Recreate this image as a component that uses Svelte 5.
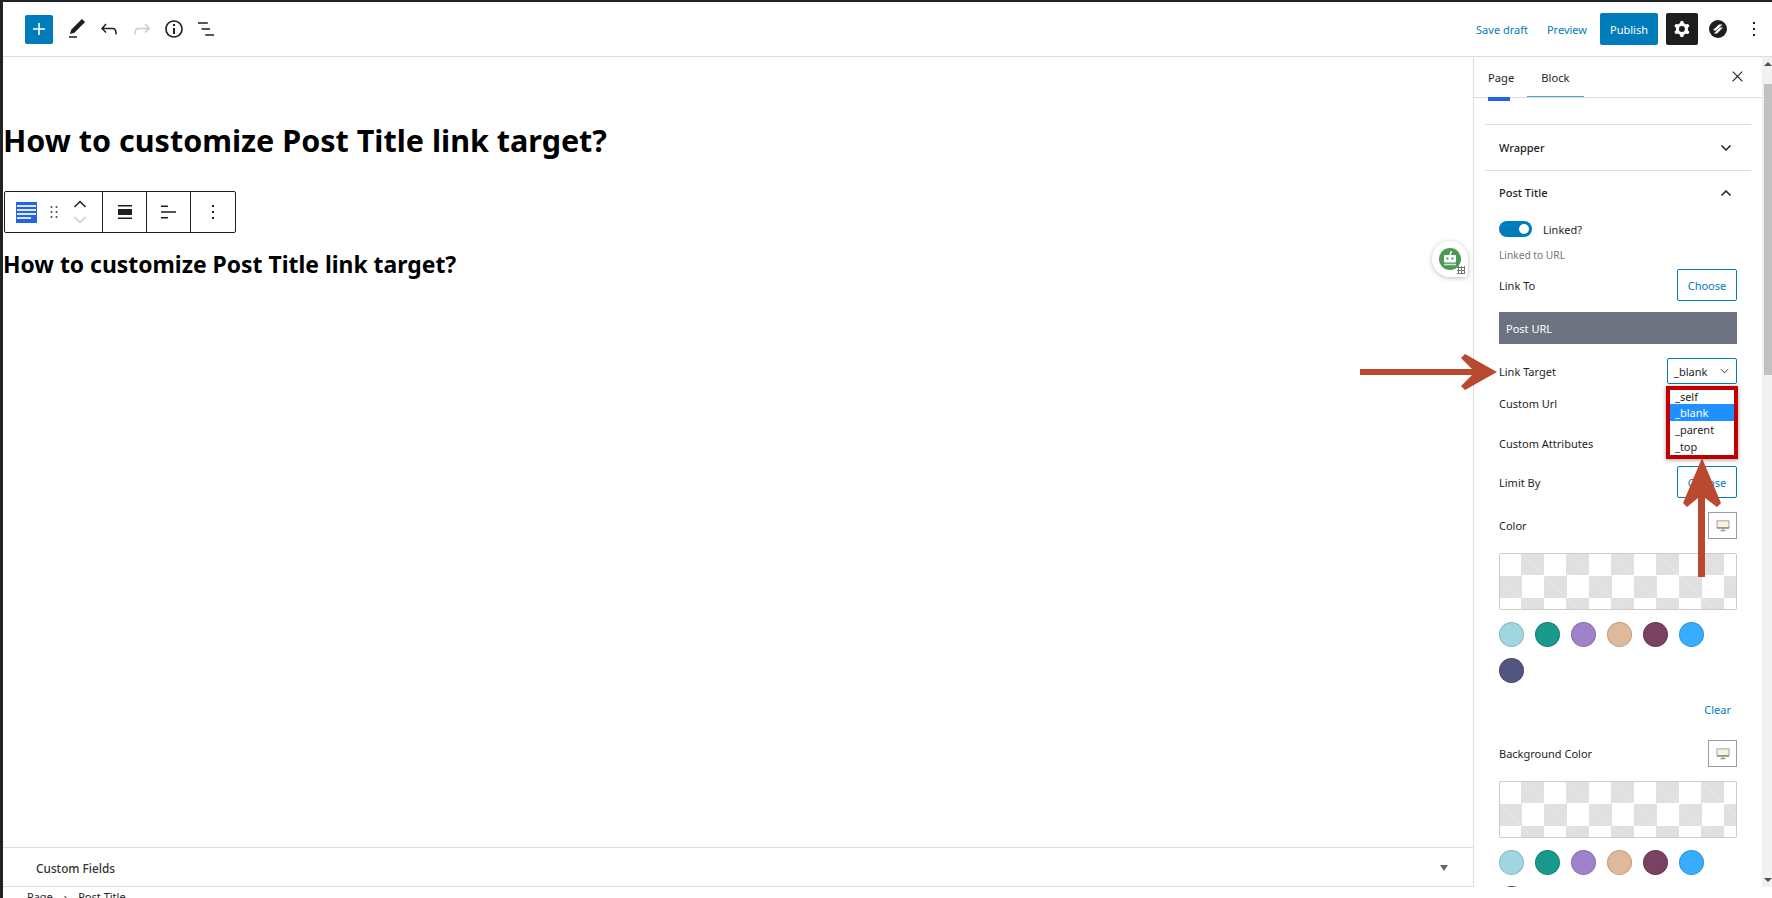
<script>
  const swatches = ['#9fd6df', '#17998c', '#a082cb', '#deb99b', '#7a4162', '#38acff', '#515580'];
</script>

{#snippet device()}
  <button class="device" aria-label="Device">
    <svg viewBox="0 0 16 14" width="14" height="12"><rect x="1" y="1" width="14" height="8" fill="#fdf3d6" stroke="#8a97a5"/><path d="M1 9.500h14M8 10v2M5 12.500h6" stroke="#666" fill="none"/></svg>
  </button>
{/snippet}

{#snippet colorControl(label)}
  <div class="row color-head"><span>{label}</span>{@render device()}</div>
  <div class="checker"></div>
  <div class="swatches">
    {#each swatches as c}
      <span class="swatch" style={`background:${c}`}></span>
    {/each}
  </div>
{/snippet}

<div class="app">
  <header class="top">
    <div class="top-left">
      <button class="add" aria-label="Add">
        <svg viewBox="0 0 24 24" width="24" height="24"><path fill="#fff" d="M18 11.200h-5.200V6h-1.600v5.200H6v1.600h5.200V18h1.600v-5.200H18z"/></svg>
      </button>
      <svg class="ic" viewBox="0 0 24 24"><path d="M20.100 5.100L16.900 2 6.200 12.700l-1.300 4.400 4.500-1.300L20.100 5.100zM4 20.800h8v-1.500H4v1.500z"/></svg>
      <svg class="ic" viewBox="0 0 24 24"><path d="M18.300 11.700c-.6-.6-1.400-.9-2.300-.9H6.700l2.900-3.300-1.100-1-4.500 5L8.500 16l1-1-2.700-2.700H16c.5 0 .9.2 1.300.5 1 1 1 3.400 1 4.500v.3h1.500v-.2c0-1.500 0-4.300-1.500-5.700z"/></svg>
      <svg class="ic off" viewBox="0 0 24 24"><path d="M15.600 6.500l-1.100 1 2.900 3.300H8c-.9 0-1.700.3-2.300.9-1.400 1.500-1.400 4.200-1.400 5.600v.2h1.500v-.3c0-1.100 0-3.500 1-4.500.3-.3.7-.5 1.300-.5h9.200L14.500 15l1.100 1.100 4.600-4.600-4.600-5z"/></svg>
      <svg class="ic" viewBox="0 0 24 24"><path d="M12 3.200c-4.800 0-8.800 3.900-8.800 8.800 0 4.800 3.900 8.800 8.800 8.800 4.800 0 8.800-3.900 8.800-8.800 0-4.800-4-8.800-8.800-8.800zm0 16c-4 0-7.200-3.300-7.200-7.200C4.800 8 8 4.800 12 4.800s7.200 3.300 7.200 7.200c0 4-3.200 7.200-7.200 7.200zM11 17h2v-6h-2v6zm0-8h2V7h-2v2z"/></svg>
      <svg class="ic" viewBox="0 0 24 24"><path d="M4 5.200h9.800v1.500H4zM7.500 11.200H16v1.500H7.500zM11.200 17.200H20v1.500h-8.800z"/></svg>
    </div>
    <div class="top-right">
      <a class="link save">Save draft</a>
      <a class="link preview">Preview</a>
      <button class="publish">Publish</button>
      <button class="settings" aria-label="Settings">
        <svg viewBox="0 0 24 24" width="24" height="24"><path fill="#fff" fill-rule="evenodd" d="M10.289 4.836A1 1 0 0111.275 4h1.306a1 1 0 01.987.836l.244 1.466c.787.26 1.503.679 2.108 1.218l1.393-.522a1 1 0 011.216.437l.653 1.130a1 1 0 01-.23 1.273l-1.148.944a6.025 6.025 0 010 2.435l1.149.946a1 1 0 01.23 1.272l-.653 1.130a1 1 0 01-1.216.437l-1.394-.522c-.605.54-1.320.958-2.108 1.218l-.244 1.466a1 1 0 01-.987.836h-1.306a1 1 0 01-.986-.836l-.244-1.466a5.995 5.995 0 01-2.108-1.218l-1.394.522a1 1 0 01-1.217-.437l-.653-1.130a1 1 0 01.23-1.272l1.149-.946a6.026 6.026 0 010-2.435l-1.148-.944a1 1 0 01-.23-1.272l.653-1.131a1 1 0 011.217-.437l1.393.522a5.994 5.994 0 012.108-1.218l.244-1.466zM14.929 12a3 3 0 11-6 0 3 3 0 016 0z"/></svg>
      </button>
      <svg class="zlogo" viewBox="0 0 18 18" width="18" height="18"><circle cx="9" cy="9" r="9" fill="#1e1e1e"/><path d="M4.500 9.500L10 4.500h3.500L7 10.500H4.500zM14 7.500L8 13.500H4.800L11 7.500z" fill="#fff"/></svg>
      <svg class="ic more" viewBox="0 0 24 24"><path d="M13 19h-2v-2h2v2zm0-6h-2v-2h2v2zm0-6h-2V5h2v2z"/></svg>
    </div>
  </header>

  <div class="main">
    <section class="canvas">
      <div class="editor">
        <h1>How to customize Post Title link target?</h1>
        <div class="toolbar">
          <div class="tb-group first">
            <span class="blockicon"><i></i><i></i><i></i><i class="short"></i></span>
            <svg viewBox="0 0 24 24" width="20" height="20" class="drag"><path d="M8 7h2V5H8v2zm0 6h2v-2H8v2zm0 6h2v-2H8v2zm6-14v2h2V5h-2zm0 8h2v-2h-2v2zm0 6h2v-2h-2v2z"/></svg>
            <span class="updown">
              <svg viewBox="0 0 14 8" width="14" height="8"><path d="M1.500 7L7 1.500 12.500 7" fill="none" stroke="#1e1e1e" stroke-width="1.500"/></svg>
              <svg viewBox="0 0 14 8" width="14" height="8"><path d="M1.500 1L7 6.500 12.500 1" fill="none" stroke="#ccc" stroke-width="1.500"/></svg>
            </span>
          </div>
          <div class="tb-group w44">
            <svg viewBox="0 0 24 24" width="24" height="24"><path d="M5 5h14v1.500H5zM5 17.500h14V19H5zM5 9h14v6H5z" fill="#1e1e1e"/></svg>
          </div>
          <div class="tb-group w44">
            <svg viewBox="0 0 24 24" width="24" height="24"><path d="M4 5.500h7V7H4zM4 11.200h15v1.500H4zM4 17h7v1.500H4z" fill="#1e1e1e"/></svg>
          </div>
          <div class="tb-group last">
            <svg viewBox="0 0 24 24" width="24" height="24"><path d="M13 19h-2v-2h2v2zm0-6h-2v-2h2v2zm0-6h-2V5h2v2z" fill="#1e1e1e"/></svg>
          </div>
        </div>
        <h2>How to customize Post Title link target?</h2>
      </div>
      <div class="custom-fields">
        <span>Custom Fields</span>
        <span class="tri"></span>
      </div>
    </section>

    <aside class="sidebar">
      <div class="side-inner">
        <div class="tabs">
          <span class="tab page">Page</span>
          <span class="tab block">Block</span>
          <svg class="close" viewBox="0 0 24 24" width="17" height="17"><path d="M13 11.800l6.100-6.300-1-1-6.100 6.200-6.100-6.200-1 1 6.100 6.300-6.500 6.700 1 1 6.500-6.600 6.500 6.600 1-1z"/></svg>
        </div>
        <div class="panels">
          <div class="panel-title wrapper-t">
            <span>Wrapper</span>
            <svg viewBox="0 0 12 8" width="12" height="8"><path d="M1.500 1.500L6 6l4.500-4.500" fill="none" stroke="#1e1e1e" stroke-width="1.500"/></svg>
          </div>
          <div class="panel-title post-t">
            <span>Post Title</span>
            <svg viewBox="0 0 12 8" width="12" height="8"><path d="M1.500 6.500L6 2l4.500 4.500" fill="none" stroke="#1e1e1e" stroke-width="1.500"/></svg>
          </div>
          <div class="body">
            <div class="toggle-row"><span class="toggle"><b></b></span><span>Linked?</span></div>
            <p class="help">Linked to URL</p>
            <div class="row linkto"><span>Link To</span><button class="choose">Choose</button></div>
            <div class="posturl">Post URL</div>
            <div class="row target">
              <span>Link Target</span>
              <span class="select">_blank
                <svg viewBox="0 0 10 6" width="9" height="6"><path d="M1 1l4 4 4-4" fill="none" stroke="#1e1e1e" stroke-width="1"/></svg>
              </span>
            </div>
            <div class="row custom-url"><span>Custom Url</span></div>
            <div class="row custom-attr"><span>Custom Attributes</span></div>
            <div class="row limit"><span>Limit By</span><button class="choose">Choose</button></div>
            {@render colorControl('Color')}
            <div class="clear-row"><a class="link">Clear</a></div>
            {@render colorControl('Background Color')}
          </div>
        </div>
      </div>
      <div class="scrollbar">
        <span class="up"></span>
        <span class="thumb"></span>
        <span class="down"></span>
      </div>
    </aside>
  </div>

  <div class="crumbs"><span>Page</span><span class="sep">›</span><span>Post Title</span></div>

  <div class="dropdown">
    <div class="first-opt">_self</div>
    <div class="sel">_blank</div>
    <div>_parent</div>
    <div>_top</div>
  </div>

  <svg class="arrows" viewBox="0 0 1772 898" width="1772" height="898">
    <g fill="#b94a30">
      <path d="M1360 369h112l-11-11 4-4 32 18-32 18-4-4 11-11h-112z"/>
      <path d="M1698 577V498l-11 9-4-4 19-45 19 45-4 4-12-9v79z"/>
    </g>
  </svg>

  <div class="bot" aria-hidden="true">
    <svg viewBox="0 0 24 24" width="24" height="24">
      <circle cx="12" cy="12" r="11" fill="#4b9a53"/>
      <rect x="6" y="8" width="12" height="7.500" rx="1" fill="#fff"/>
      <rect x="8.500" y="10.500" width="2" height="2" fill="#4b9a53"/>
      <rect x="13.500" y="10.500" width="2" height="2" fill="#4b9a53"/>
      <path d="M12 8l1.500-4" stroke="#fff" stroke-width="1.500"/>
      <path d="M6 17.500h12" stroke="#cfe6d1" stroke-width="1.500"/>
    </svg>
    <span class="grip"></span>
  </div>
  <span class="edge"></span>
</div>

<style>
  :global(body) { margin: 0; background: #fff; overflow: hidden; }
  .app {
    position: relative;
    width: 1772px; height: 898px; overflow: hidden;
    box-sizing: border-box;
    border-top: 2px solid #1d2327;
    border-left: 3px solid #1d2327;
    display: flex; flex-direction: column;
    font-family: "Noto Sans", "Open Sans", sans-serif;
    font-size: 11px; color: #1e1e1e;
  }
  button { font: inherit; border: 0; padding: 0; background: none; display: inline-flex; align-items: center; justify-content: center; }
  p { margin: 0; }
  .top {
    height: 55px; flex: none; box-sizing: border-box;
    border-bottom: 1px solid #ddd;
    display: flex; justify-content: space-between; align-items: center;
  }
  .top-left { display: flex; align-items: center; padding-left: 22px; }
  .add { width: 28px; height: 29px; background: #007cba; border-radius: 2px; margin-right: 12px; }
  .ic { width: 24px; height: 24px; fill: #1e1e1e; margin-right: 8.300px; }
  .ic.off { fill: #ccc; }
  .top-right { display: flex; align-items: center; padding-right: 6px; }
  .link { color: #007cba; }
  .save { margin-right: 19px; }
  .preview { margin-right: 13px; }
  .publish { width: 58px; height: 32px; background: #007cba; color: #fff; border-radius: 2px; margin-right: 8px; }
  .settings { width: 32px; height: 32px; background: #1e1e1e; border-radius: 2px; margin-right: 11px; }
  .zlogo { margin-right: 15px; }
  .ic.more { margin: 0; }
  .main { height: 830px; flex: none; display: flex; }
  .canvas { flex: 1; min-width: 0; display: flex; flex-direction: column; }
  .editor { flex: 1; min-height: 0; }
  h1 { margin: 0; padding-top: 63px; font-size: 30.500px; line-height: 40px; font-weight: 700; color: #000; }
  h2 { margin: 0; padding-top: 16px; font-size: 22.900px; line-height: 32px; font-weight: 700; color: #000; }
  .toolbar {
    display: flex; width: 232px; height: 42px; box-sizing: border-box; margin: 31px 0 0 1px;
    border: 1px solid #1e1e1e; border-radius: 2px;
  }
  .tb-group { display: flex; align-items: center; justify-content: center; box-sizing: border-box; border-right: 1px solid #1e1e1e; height: 100%; }
  .tb-group.first { width: 98px; justify-content: flex-start; padding-left: 11px; }
  .tb-group.w44 { width: 44px; }
  .tb-group.last { flex: 1; border-right: 0; }
  .blockicon { width: 21px; height: 21px; background: #2563eb; display: flex; flex-direction: column; justify-content: center; gap: 2px; padding: 0 1px; box-sizing: border-box; }
  .blockicon i { display: block; height: 2px; background: #dfe8fc; }
  .blockicon i.short { width: 75%; }
  .drag { margin-left: 7px; fill: #1e1e1e; }
  .updown { display: flex; flex-direction: column; gap: 8px; margin-left: 9px; }
  .custom-fields {
    height: 40px; flex: none; box-sizing: border-box;
    border-top: 1px solid #ddd; border-bottom: 1px solid #ddd;
    display: flex; align-items: center; justify-content: space-between;
    padding: 2px 25px 0 33px; font-size: 11.800px; font-weight: 500; color: #333;
  }
  .tri { border-left: 4px solid transparent; border-right: 4px solid transparent; border-top: 6px solid #666; }
  .sidebar { width: 299px; flex: none; display: flex; border-left: 1px solid #ddd; box-sizing: border-box; height: 830px; }
  .side-inner { flex: 1; min-width: 0; overflow: hidden; }
  .tabs { height: 41px; position: relative; box-sizing: border-box; border-bottom: 1px solid #ddd; display: flex; align-items: center; padding-left: 14px; }
  .tab { font-size: 11.200px; }
  .tab.page { position: relative; color: #1e1e1e; }
  .tab.page::after { content: ""; position: absolute; left: 0; width: 22px; height: 4px; background: #2563eb; top: 27px; }
  .tab.block { margin-left: 27px; position: relative; }
  .tab.block::after { content: ""; position: absolute; left: -14px; right: -14px; height: 1px; background: #4ca6d4; top: 26px; }
  .close { position: absolute; right: 16px; top: 11px; fill: #1e1e1e; }
  .panels { padding: 26px 12px 0 11px; width: 266px; box-sizing: content-box; }
  .panel-title { display: flex; justify-content: space-between; align-items: center; border-top: 1px solid #ddd; height: 46px; box-sizing: border-box; padding: 0 0 0 14px; font-weight: 500; padding-right: 19px; }
  .post-t { height: 44px; }
  .body { padding: 7px 0 0 14px; width: 238px; }
  .toggle-row { display: flex; align-items: center; gap: 11px; height: 16px; }
  .toggle { width: 33px; height: 16px; border-radius: 8px; background: #007cba; position: relative; display: block; }
  .toggle b { position: absolute; right: 3px; top: 3px; width: 10px; height: 10px; border-radius: 50%; background: #fff; }
  .help { font-size: 10.200px; color: #757575; margin-top: 11px; line-height: 14px; }
  .row { display: flex; justify-content: space-between; align-items: center; }
  .linkto { margin-top: 7px; height: 32px; }
  .choose { width: 60px; height: 32px; box-sizing: border-box; border: 1px solid #007cba; border-radius: 2px; color: #007cba; background: #fff; }
  .posturl { margin-top: 11px; height: 32px; background: #6c7280; color: #fff; display: flex; align-items: center; padding-left: 7px; }
  .target { margin-top: 14px; height: 26px; }
  .select { width: 70px; height: 26px; box-sizing: border-box; border: 1.500px solid #007cba; border-radius: 2px; display: flex; align-items: center; justify-content: space-between; padding: 0 7px 0 6px; }
  .custom-url { margin-top: 9px; height: 20px; }
  .custom-attr { margin-top: 20px; height: 20px; }
  .limit { margin-top: 13px; height: 32px; }
  .color-head { height: 27px; }
  .limit + .color-head { margin-top: 14px; }
  .device { width: 29px; height: 27px; box-sizing: border-box; border: 1px solid #9a9aaa; }
  .checker {
    margin-top: 14px; height: 57px; box-sizing: border-box; border: 1px solid #ccc; border-radius: 2px;
    background-color: #fff;
    background-image:
      linear-gradient(to top right, transparent calc(50% - .5px), rgba(255,255,255,.3) 50%, transparent calc(50% + .5px)),
      conic-gradient(#e0e0e0 25%, transparent 0 50%, #e0e0e0 0 75%, transparent 0);
    background-size: 22.500px 22.500px, 45px 45px;
    background-position: -1px -1px, -1px -1px;
  }
  .swatches { display: flex; flex-wrap: wrap; gap: 11px; margin-top: 12px; width: 220px; }
  .swatch { width: 25px; height: 25px; border-radius: 50%; box-sizing: border-box; box-shadow: inset 0 0 0 1px rgba(0,0,0,.15); }
  .clear-row { display: flex; justify-content: flex-end; padding-right: 6px; margin-top: 19px; height: 16px; line-height: 16px; margin-bottom: 22px; }
  .scrollbar { width: 10px; flex: none; background: #f1f1f1; position: relative; }
  .thumb { position: absolute; left: 2px; right: 0; top: 27px; height: 291px; background: #c1c1c1; }
  .up, .down { position: absolute; left: 2px; border-left: 4px solid transparent; border-right: 4px solid transparent; }
  .up { top: 5px; border-bottom: 4px solid #505050; }
  .down { bottom: 5px; border-top: 4px solid #505050; }
  .crumbs { flex: none; height: 11px; padding-left: 24px; display: flex; gap: 11px; line-height: 20px; }
  .dropdown {
    position: absolute; left: 1663px; top: 384px; width: 72px; height: 73px; box-sizing: border-box;
    border: 4px solid #c00000; background: #fff; box-shadow: 0 1px 4px rgba(0,0,0,.4); line-height: 17px;
  }
  .dropdown div { height: 17px; padding-left: 5px; }
  .dropdown .first-opt { height: 14px; line-height: 14px; }
  .dropdown .sel { background: #1e90ff; color: #fff; }
  .arrows { position: absolute; left: -3px; top: -2px; pointer-events: none; }
  .bot {
    position: absolute; left: 1429px; top: 239px; width: 36px; height: 36px; border-radius: 50% 50% 4px 50%;
    background: #fff; box-shadow: 0 1px 5px rgba(0,0,0,.25); display: flex; align-items: center; justify-content: center;
  }
  .grip { position: absolute; right: 3px; bottom: 3px; width: 8px; height: 8px; background-image: radial-gradient(#777 1px, transparent 1.200px); background-size: 3px 3px; }
  .edge { position: absolute; left: -3px; top: 170px; width: 3px; height: 16px; background: #2271b1; }
</style>
